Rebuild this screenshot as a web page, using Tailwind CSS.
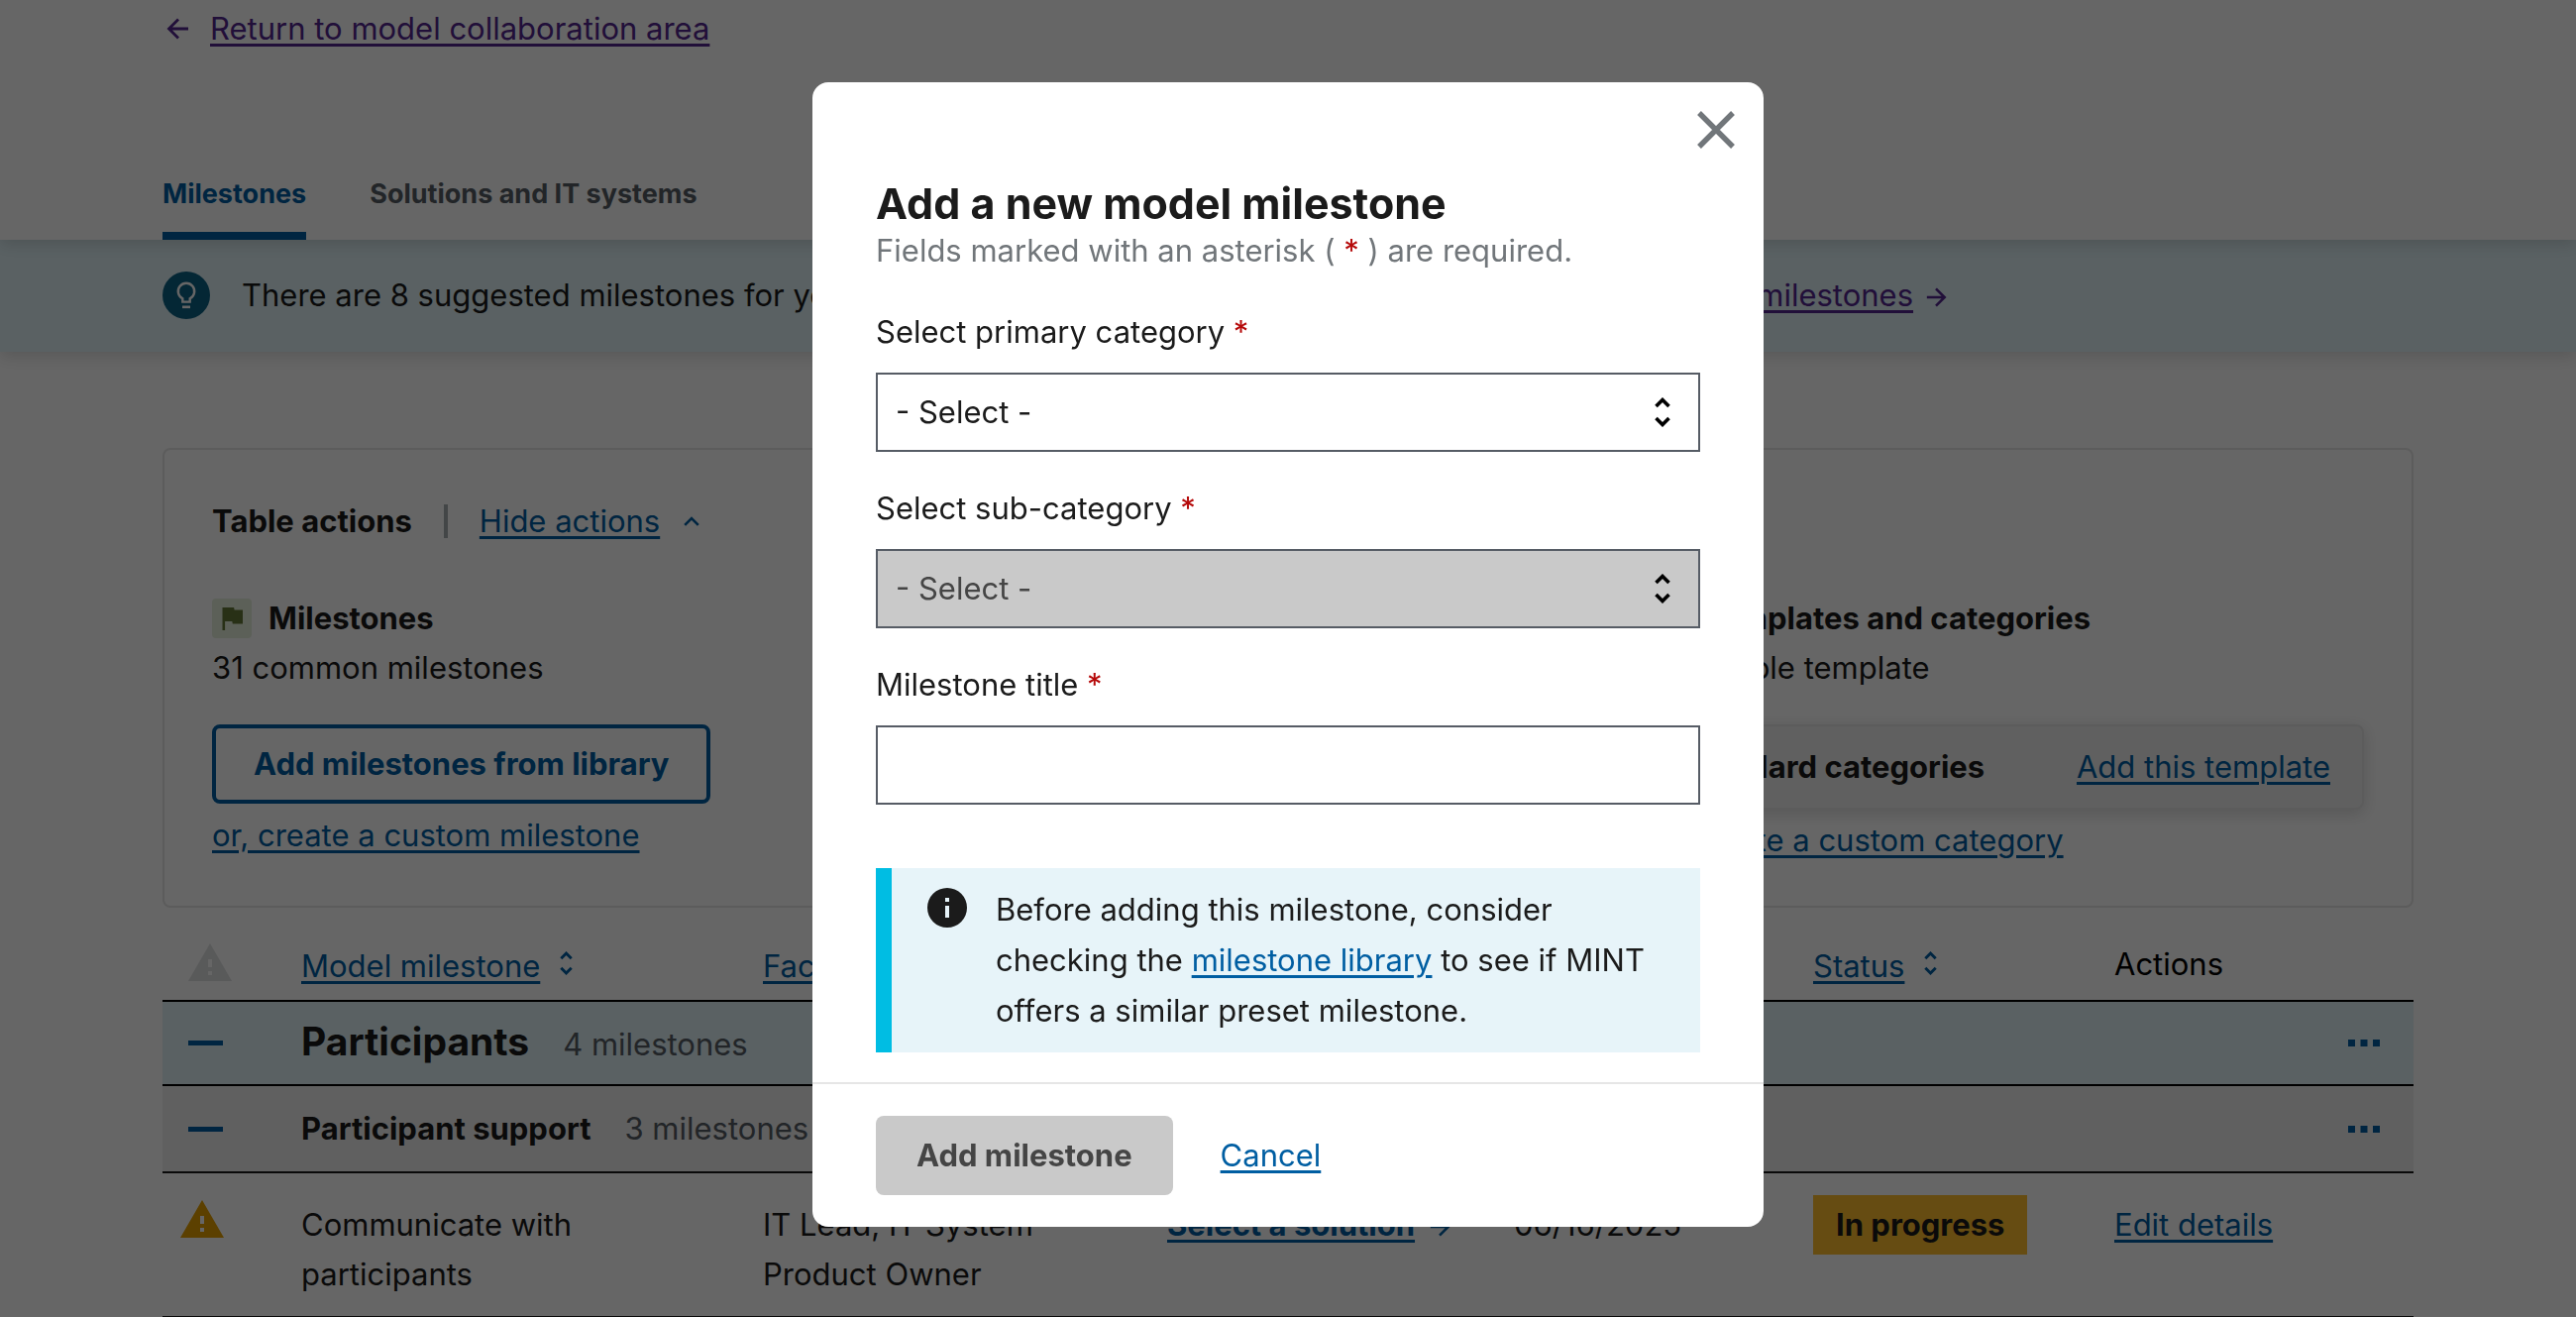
<!DOCTYPE html>
<html lang="en">
<head>
<meta charset="utf-8">
<meta name="viewport" content="width=device-width, initial-scale=1">
<title>Model-to-operations matrix</title>
<script src="https://cdn.jsdelivr.net/npm/@tailwindcss/browser@4"></script>
</head>
<body class="h-screen overflow-hidden bg-white font-['Inter',sans-serif] text-[31px] leading-[50px] text-[#1b1b1b]">

<svg class="hidden">
  <symbol id="arrow" viewBox="0 0 24 24"><path d="M2 12h19M12 2.500l9.500 9.500-9.500 9.500" fill="none" stroke="currentColor" stroke-width="2.800"/></symbol>
  <symbol id="sort" viewBox="0 0 16 30"><path d="M1.500 9L8 2.500 14.500 9M1.500 21L8 27.500 14.500 21" fill="none" stroke="currentColor" stroke-width="3.600"/></symbol>
  <symbol id="warning" viewBox="1 2 22 19"><path d="M1 21h22L12 2 1 21zm12-3h-2v-2h2v2zm0-4h-2v-4h2v4z" fill="currentColor"/></symbol>
  <symbol id="dots" viewBox="0 0 32 7"><path d="M0 0h7v7H0zM12.500 0h7v7h-7zM25 0h7v7h-7z" fill="currentColor"/></symbol>
</svg>

<div>
  <header class="relative bg-white px-[164px] shadow-[0_4px_16px_rgba(0,0,0,0.15)]">
    <a href="#" class="flex items-center gap-[20px] pt-[4px] text-[#54278f]">
      <svg class="ml-[4px] h-[24px] w-[24px] rotate-180"><use href="#arrow"/></svg>
      <span class="underline decoration-[3px] underline-offset-[4px]">Return to model collaboration area</span>
    </a>
    <nav class="mt-[108px] flex gap-[64px] text-[27px] leading-[68px] font-bold text-[#565c65]">
      <a href="#" class="border-b-[8px] border-[#005ea2] pb-[4px] text-[#005ea2]">Milestones</a>
      <a href="#">Solutions and IT systems</a>
    </nav>
  </header>

  <section class="flex items-center bg-[#e1f3f8] px-[164px] pt-[31px] pb-[32px] shadow-[0_4px_16px_rgba(0,0,0,0.15)]">
    <svg class="mr-[32px] h-[48px] w-[48px]" viewBox="0 0 48 48"><circle cx="24" cy="24" r="24" fill="#0c6184"/><path d="M20.300 30.600V27.300A8.200 8.200 0 1 1 27.700 27.300V30.600z" fill="none" stroke="#fff" stroke-width="2.400"/><path d="M20 34.500h8v2.600h-8z" fill="#fff"/></svg>
    <p class="min-w-[1286px]">There are 8 suggested milestones for your model.</p>
    <a href="#" class="flex items-center gap-[12px] text-[#54278f]"><span class="underline decoration-[3px] underline-offset-[4px]">View suggested milestones</span><svg class="mt-[4px] h-[22px] w-[22px]"><use href="#arrow"/></svg></a>
  </section>

  <main class="px-[164px] pt-[97px]">
    <section class="rounded-[8px] border-2 border-[#e6e6e6] px-[48px] pt-[47px] pb-[41px]">
      <div class="flex items-center">
        <h2 class="font-bold">Table actions</h2>
        <span class="mx-[32px] h-[34px] w-[4px] bg-[#a9aeb1]"></span>
        <button class="flex items-center gap-[24px] text-[#005ea2]"><span class="underline decoration-[3px] underline-offset-[4px]">Hide actions</span><svg class="h-[10px] w-[16px]" viewBox="0 0 16 10"><path d="M1.200 8.800L8 2l6.800 6.800" fill="none" stroke="currentColor" stroke-width="2.600"/></svg></button>
      </div>
      <div class="mt-[48px] grid grid-cols-3">
        <div>
          <div class="flex items-center gap-[17px]"><svg class="h-[40px] w-[40px]" viewBox="0 0 40 40"><rect width="40" height="40" rx="4" fill="#e6f0dc"/><path d="M22.600 11.500L22.100 9H10.500v23h2.600v-9h7.200l.5 2.500h10.200v-14z" fill="#647837"/></svg><h3 class="font-bold">Milestones</h3></div>
          <p>31 common milestones</p>
          <button class="mt-[32px] block rounded-[8px] border-4 border-[#005ea2] px-[38px] leading-[72px] font-bold text-[#005ea2]">Add milestones from library</button>
          <a href="#" class="mt-[7px] inline-block text-[#005ea2] underline decoration-[3px] underline-offset-[4px]">or, create a custom milestone</a>
        </div>
        <div></div>
        <div>
          <div class="flex items-center gap-[17px]"><span class="h-[40px] w-[40px] rounded-[4px] bg-[#f0f0f0]"></span><h3 class="font-bold">Templates and categories</h3></div>
          <p>1 available template</p>
          <div class="mt-[32px] flex items-center justify-between rounded-[8px] border-2 border-[#e6e6e6] bg-[#f0f0f0] px-[32px] py-[16px] shadow-[0_4px_16px_rgba(0,0,0,0.15)]"><span class="font-bold">Standard categories</span><a href="#" class="text-[#005ea2] underline decoration-[3px] underline-offset-[4px]">Add this template</a></div>
          <a href="#" class="mt-[6px] inline-block text-[#005ea2] underline decoration-[3px] underline-offset-[4px]">or, create a custom category</a>
        </div>
      </div>
    </section>

    <table class="mt-[32px] w-full table-fixed border-collapse text-left">
      <colgroup><col class="w-[140px]"><col class="w-[466px]"><col class="w-[408px]"><col class="w-[350px]"><col class="w-[302px]"><col class="w-[304px]"><col></colgroup>
      <thead>
        <tr class="h-[62px] border-b-2 border-black align-top">
          <th class="pt-[4px] pl-[26px]"><svg class="h-[38px] w-[44px] text-[#dfe1e2]"><use href="#warning"/></svg></th>
          <th class="pt-[2px] font-normal text-[#005ea2]"><button class="flex gap-[20px]"><span class="underline decoration-[3px] underline-offset-[4px]">Model milestone</span><svg class="mt-[10px] h-[24px] w-[13px]"><use href="#sort"/></svg></button></th>
          <th class="pt-[2px] font-normal text-[#005ea2]"><button class="underline decoration-[3px] underline-offset-[4px]">Facilitated by</button></th>
          <th></th>
          <th></th>
          <th class="pt-[2px] font-normal text-[#005ea2]"><button class="flex gap-[20px]"><span class="underline decoration-[3px] underline-offset-[4px]">Status</span><svg class="mt-[10px] h-[24px] w-[13px]"><use href="#sort"/></svg></button></th>
          <th class="font-normal text-black">Actions</th>
        </tr>
      </thead>
      <tbody>
        <tr class="h-[85px] border-b-2 border-black bg-[#e1f3f8]">
          <td class="pl-[26px]"><div class="h-[5px] w-[35px] bg-[#005ea2]"></div></td>
          <td colspan="5"><div class="flex items-baseline gap-[34px]"><h2 class="text-[39px] font-bold">Participants</h2><span class="text-[#565c65]">4 milestones</span></div></td>
          <td class="pr-[34px]"><button class="ml-auto block"><svg class="h-[7px] w-[32px] text-[#005ea2]"><use href="#dots"/></svg></button></td>
        </tr>
        <tr class="h-[88px] border-b-2 border-[#1b1b1b] bg-[#f0f0f0]">
          <td class="pl-[26px]"><div class="h-[5px] w-[35px] bg-[#005ea2]"></div></td>
          <td colspan="5"><div class="flex items-baseline gap-[34px]"><h3 class="font-bold">Participant support</h3><span class="text-[#565c65]">3 milestones</span></div></td>
          <td class="pr-[34px]"><button class="ml-auto block"><svg class="h-[7px] w-[32px] text-[#005ea2]"><use href="#dots"/></svg></button></td>
        </tr>
        <tr class="h-[146px] border-b-2 border-[#1b1b1b] align-top">
          <td class="pt-[27px] pl-[18px]"><svg class="h-[38px] w-[44px] text-[#e5a000]"><use href="#warning"/></svg></td>
          <td class="pt-[27px] pr-[100px]">Communicate with participants</td>
          <td class="pt-[27px] pr-[60px]">IT Lead, IT System Product Owner</td>
          <td class="pt-[27px]"><a href="#" class="flex items-center gap-[14px] font-bold text-[#005ea2]"><span class="underline decoration-[3px] underline-offset-[4px]">Select a solution</span><svg class="mt-[4px] h-[22px] w-[22px]"><use href="#arrow"/></svg></a></td>
          <td class="pt-[27px]">06/16/2025</td>
          <td class="pt-[22px]"><span class="inline-block bg-[#ffbe2e] px-[23px] leading-[60px] font-bold">In progress</span></td>
          <td class="pt-[27px]"><a href="#" class="text-[#005ea2] underline decoration-[3px] underline-offset-[4px]">Edit details</a></td>
        </tr>
      </tbody>
    </table>
  </main>
</div>

<div class="fixed inset-0 z-10 flex items-start justify-center bg-black/60 pt-[83px]">
  <form role="dialog" aria-modal="true" aria-labelledby="dialog-title" class="relative w-[960px] rounded-[16px] bg-white">
    <button type="button" aria-label="Close" class="absolute top-[28px] right-[28px] text-[#71767a]"><svg class="h-[40px] w-[40px]" viewBox="0 0 40 40"><path d="M3 3l34 34M37 3L3 37" fill="none" stroke="currentColor" stroke-width="5.400"/></svg></button>
    <div class="px-[64px] pt-[94px] pb-[30px]">
      <h1 id="dialog-title" class="text-[43px] leading-[56px] font-bold">Add a new model milestone</h1>
      <p class="-mt-[5px] text-[#71767a]">Fields marked with an asterisk ( <span class="text-[#b50909]">*</span> ) are required.</p>

      <label for="category" class="mt-[32px] block">Select primary category <span class="text-[#b50909]">*</span></label>
      <div class="relative mt-[16px]">
        <select id="category" class="block h-[80px] w-full appearance-none border-2 border-[#565c65] bg-white pl-[18px]"><option>- Select -</option></select>
        <svg class="pointer-events-none absolute top-[25px] right-[30px] h-[30px] w-[16px] text-black"><use href="#sort"/></svg>
      </div>

      <label for="subcategory" class="mt-[32px] block">Select sub-category <span class="text-[#b50909]">*</span></label>
      <div class="relative mt-[16px]">
        <select id="subcategory" disabled class="block h-[80px] w-full appearance-none border-2 border-[#565c65] bg-[#c9c9c9] pl-[18px] text-[#454545] opacity-100"><option>- Select -</option></select>
        <svg class="pointer-events-none absolute top-[25px] right-[30px] h-[30px] w-[16px] text-black"><use href="#sort"/></svg>
      </div>

      <label for="title" class="mt-[32px] block">Milestone title <span class="text-[#b50909]">*</span></label>
      <input id="title" type="text" class="mt-[16px] block h-[80px] w-full border-2 border-[#565c65] bg-white px-[18px]">

      <div class="mt-[64px] flex gap-[29px] border-l-[16px] border-[#00bde3] bg-[#e7f4f9] pt-[16px] pr-[32px] pb-[17px] pl-[36px] leading-[51px]">
        <svg class="mt-[4px] h-[40px] w-[40px] shrink-0" viewBox="2 2 20 20"><path d="M12 2a10 10 0 1 0 0 20 10 10 0 0 0 0-20zm1 15h-2v-6h2v6zm0-8h-2V7h2v2z" fill="#1b1b1b"/></svg>
        <p>Before adding this milestone, consider checking the <a href="#" class="text-[#005ea2] underline decoration-[3px] underline-offset-[4px]">milestone library</a> to see if MINT offers a similar preset milestone.</p>
      </div>
    </div>
    <div class="flex items-center gap-[48px] border-t-2 border-[#e6e6e6] px-[64px] pt-[32px] pb-[32px]">
      <button type="submit" disabled class="rounded-[8px] bg-[#c9c9c9] px-[41px] leading-[80px] font-bold text-[#454545]">Add milestone</button>
      <button type="button" class="text-[#005ea2] underline decoration-[3px] underline-offset-[4px]">Cancel</button>
    </div>
  </form>
</div>
</body>
</html>
